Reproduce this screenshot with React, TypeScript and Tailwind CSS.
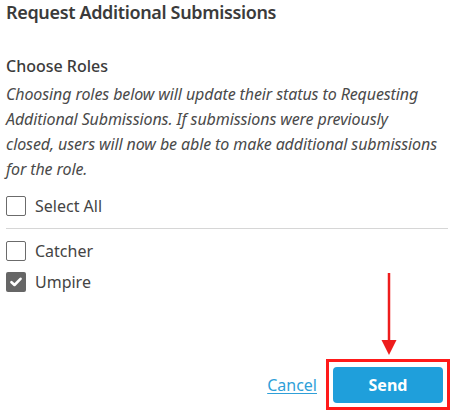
import React from "react";

function Box({ checked }: { checked?: boolean }) {
  return checked ? (
    <span className="flex h-5 w-5 shrink-0 items-center justify-center rounded-[2px] bg-[#666666]">
      <svg width="12" height="10" viewBox="0 0 12 10">
        <path d="M1.5 5.2 L4.5 8 L10.5 1.8" fill="none" stroke="#ffffff" strokeWidth="2.6" strokeLinecap="round" strokeLinejoin="round" />
      </svg>
    </span>
  ) : (
    <span className="block h-5 w-5 shrink-0 rounded-[2px] border border-[#6b6b6b] bg-white" />
  );
}

function Row({ label, checked }: { label: string; checked?: boolean }) {
  return (
    <div className="flex h-5 items-center gap-[9px]">
      <Box checked={checked} />
      <span className="text-[16px] leading-5 text-[#444444]">{label}</span>
    </div>
  );
}

export default function App() {
  return (
    <div
      className="relative h-[419px] w-[470px] overflow-hidden bg-white"
      style={{ fontFamily: '"Noto Sans", "Open Sans", sans-serif' }}
    >
      <div className="flex w-[442px] flex-col pl-[6px]">
        <h1 className="h-6 text-[18px] font-semibold leading-6 tracking-[-0.35px] text-[#3b3b3b]">
          Request Additional Submissions
        </h1>
        <h2 className="mt-[30px] h-6 text-[16px] font-medium leading-6 text-[#3b3b3b]">Choose Roles</h2>
        <p className="mt-[4px] whitespace-nowrap text-[16px] italic leading-[25px] tracking-[-0.1px] text-[#4a4a4a]">
          Choosing roles below will update their status to Requesting
          <br />
          Additional Submissions. If submissions were previously
          <br />
          closed, users will now be able to make additional submissions
          <br />
          for the role.
        </p>
        <div className="mt-[14px]">
          <Row label="Select All" />
        </div>
        <div className="mt-[12px] h-px w-[442px] bg-[#d6d6d6]" />
        <div className="mt-[12px] flex flex-col gap-[11px]">
          <Row label="Catcher" />
          <Row label="Umpire" checked />
        </div>
      </div>
      <div className="mt-[67px] flex items-center justify-end gap-[9px] pr-[20px]">
        <a href="#" className="text-[16px] text-[#2f9fd8] underline underline-offset-2">
          Cancel
        </a>
        <span className="block border-[3px] border-[#ff1a1a] px-1 pt-[5px] pb-1">
          <button className="block h-9 w-[110px] rounded-[4px] bg-[#1f9fdb] text-[16px] font-bold text-white">
            Send
          </button>
        </span>
      </div>
      <svg className="absolute left-[380px] top-[272px]" width="18" height="84" viewBox="0 0 18 84">
        <line x1="9" y1="1" x2="9" y2="70" stroke="#ee1c1c" strokeWidth="2.5" />
        <polygon points="1.5,68 16.5,68 9,83" fill="#ee1c1c" />
      </svg>
    </div>
  );
}
